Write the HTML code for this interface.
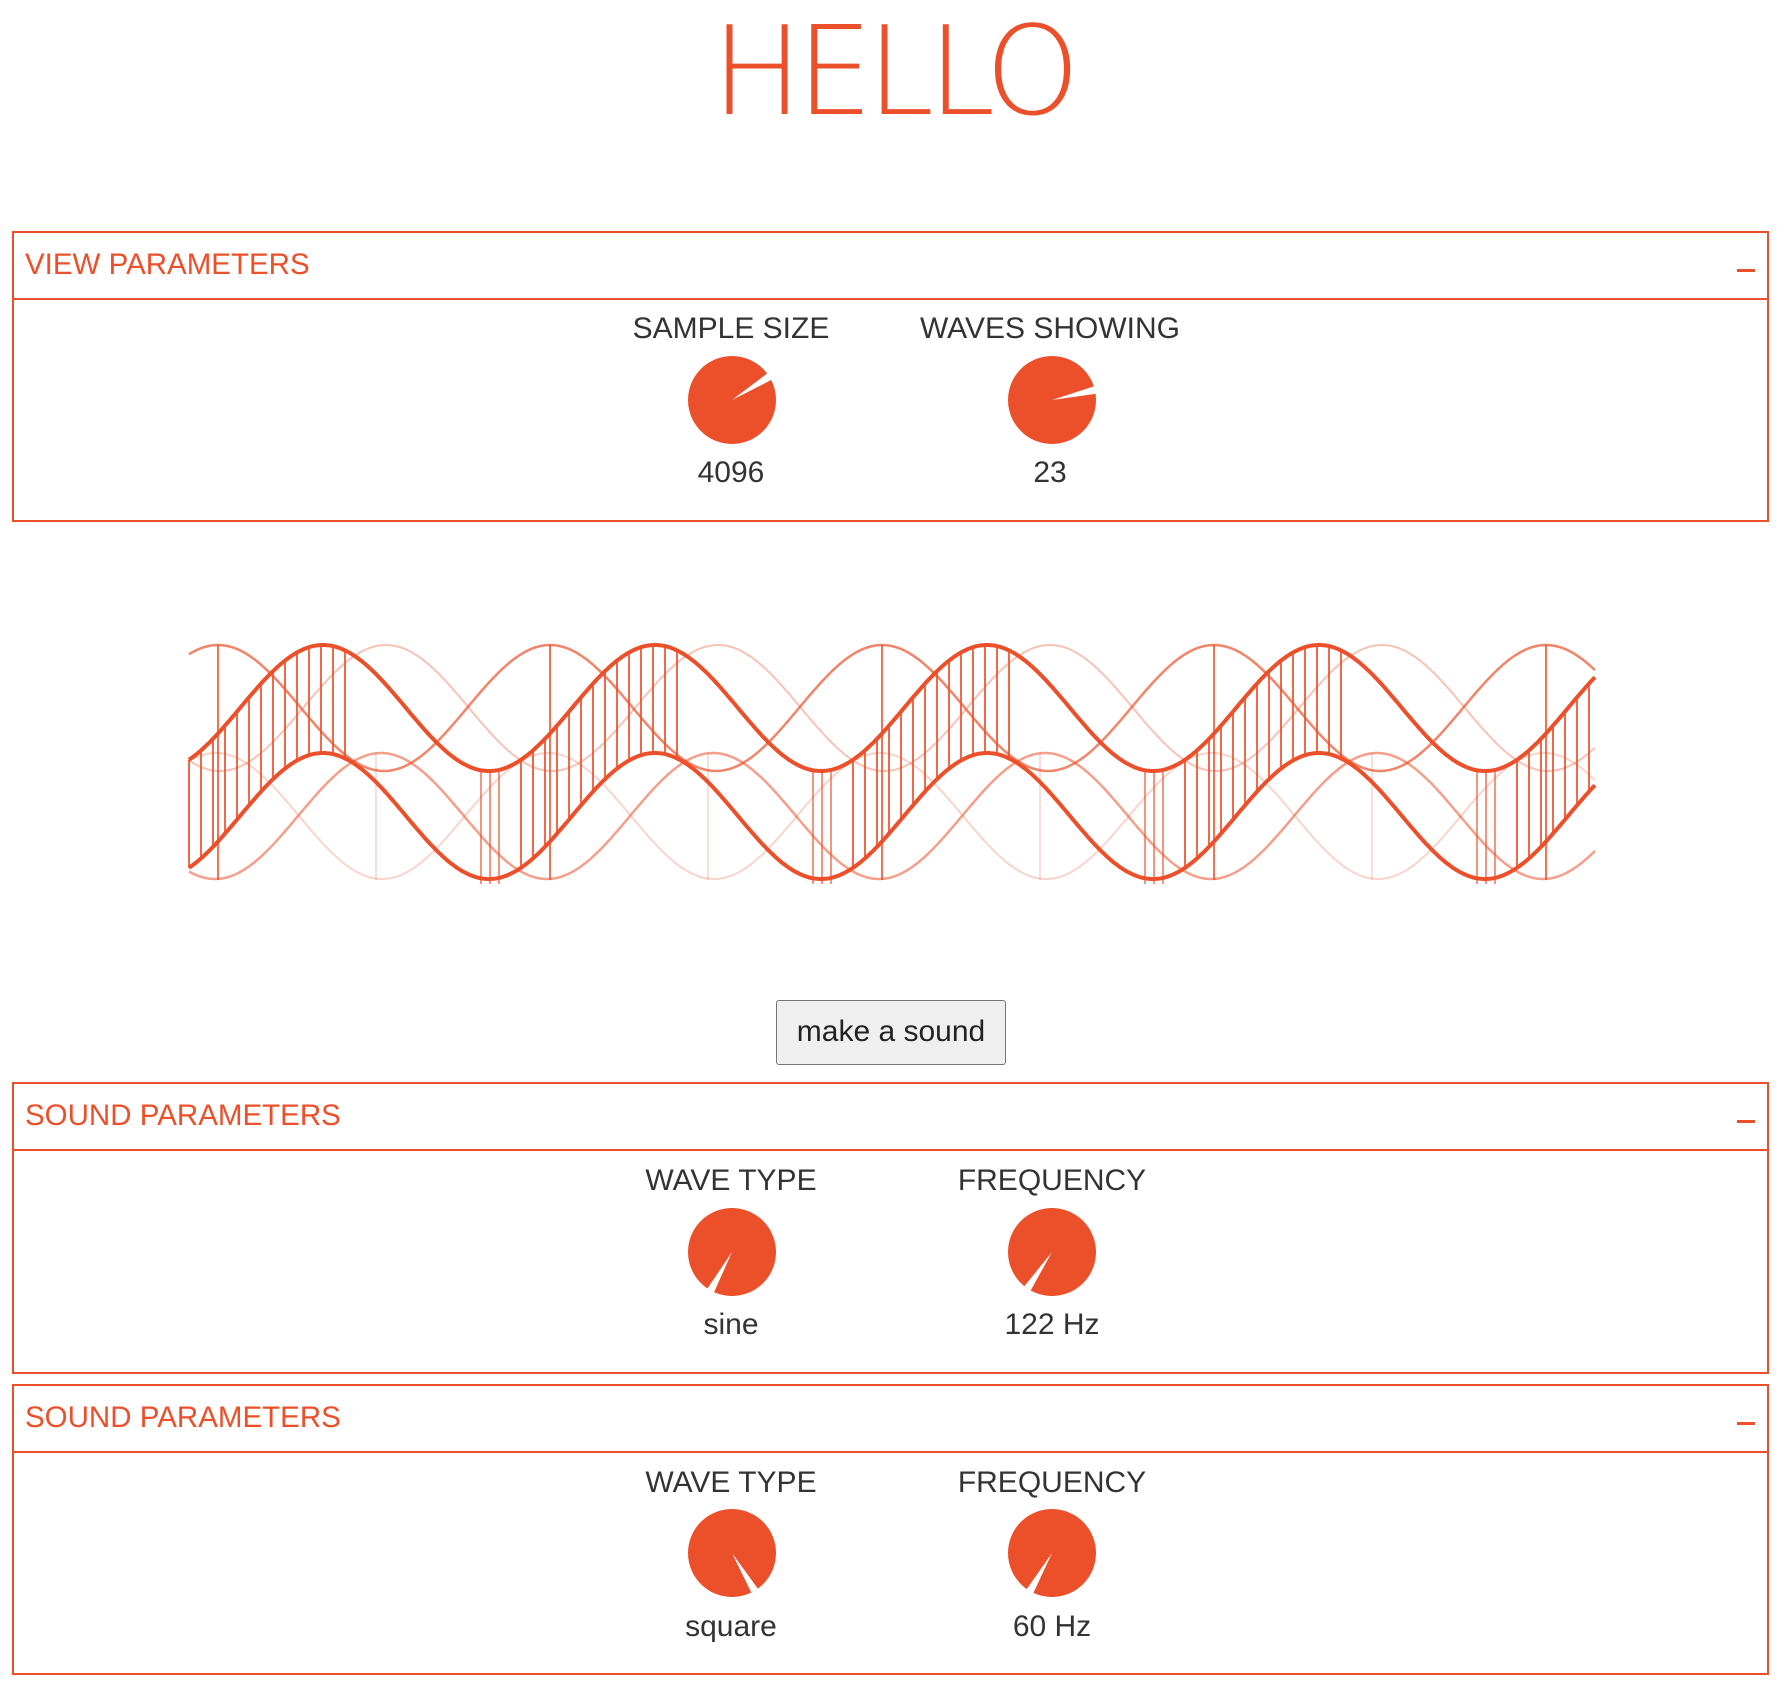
<!DOCTYPE html>
<html><head><meta charset="utf-8"><style>
body{margin:0;width:1786px;height:1702px;background:#fff;position:relative;font-family:"Liberation Sans",Arial,sans-serif;color:#333;overflow:hidden}
.abs{position:absolute}
.hello{left:0;width:1786px;top:12px;text-align:center;font-family:"DejaVu Sans","Liberation Sans",sans-serif;font-weight:200;font-size:123px;color:#ec502a;letter-spacing:-6px;line-height:122px;transform:scaleX(0.98)}
.box{position:absolute;left:12px;width:1757px;border:2px solid #ec502a;box-sizing:border-box}
.hd{position:absolute;left:0;right:0;top:0;height:65px;border-bottom:2px solid #ec502a}
.ttl{position:absolute;left:11px;top:15px;font-size:29.5px;color:#ec502a}
.minus{position:absolute;right:12px;top:36px;width:18px;height:3px;background:#ec502a}
.lbl{position:absolute;width:300px;text-align:center;font-size:30px;color:#333;line-height:36px}
.btn{left:776px;top:1000px;width:230px;height:65px;background:#efefef;border:1px solid #767676;border-radius:3px;box-sizing:border-box;font-size:30px;text-align:center;line-height:62px;color:#222}
</style></head><body>
<div class="abs hello">HELLO</div>

<div class="box" style="top:231px;height:291px"><div class="hd"><div class="ttl">VIEW PARAMETERS</div><div class="minus"></div></div></div>
<div class="lbl" style="left:581px;top:311px">SAMPLE SIZE</div>
<div class="lbl" style="left:900px;top:311px">WAVES SHOWING</div>
<div class="lbl" style="left:581px;top:455px">4096</div>
<div class="lbl" style="left:900px;top:455px">23</div>

<div class="abs btn">make a sound</div>

<div class="box" style="top:1082px;height:292px"><div class="hd"><div class="ttl">SOUND PARAMETERS</div><div class="minus"></div></div></div>
<div class="lbl" style="left:581px;top:1163px">WAVE TYPE</div>
<div class="lbl" style="left:902px;top:1163px">FREQUENCY</div>
<div class="lbl" style="left:581px;top:1307px">sine</div>
<div class="lbl" style="left:902px;top:1307px">122 Hz</div>

<div class="box" style="top:1384px;height:291px"><div class="hd"><div class="ttl">SOUND PARAMETERS</div><div class="minus"></div></div></div>
<div class="lbl" style="left:581px;top:1465px">WAVE TYPE</div>
<div class="lbl" style="left:902px;top:1465px">FREQUENCY</div>
<div class="lbl" style="left:581px;top:1609px">square</div>
<div class="lbl" style="left:902px;top:1609px">60 Hz</div>

<svg class="abs" style="left:0;top:0" width="1786" height="1702" id="s">
<g id="knobs"></g>
<g id="waves" fill="none" stroke="#ec502a"></g>
</svg>
<script>
var ns="http://www.w3.org/2000/svg";
function el(p,t,a){var e=document.createElementNS(ns,t);for(var k in a)e.setAttribute(k,a[k]);p.appendChild(e);return e;}
var K=document.getElementById('knobs');
[[732,400,-32],[1052,400,-13],[732,1252,119],[1052,1252,124],[732,1553,59],[1052,1553,120]].forEach(function(k){
 el(K,'circle',{cx:k[0],cy:k[1],r:44,fill:'#ec502a'});
 var a1=(k[2]-5)*Math.PI/180,a2=(k[2]+5)*Math.PI/180,r=50;
 el(K,'polygon',{fill:'#fff',points:k[0]+','+k[1]+' '+(k[0]+r*Math.cos(a1))+','+(k[1]+r*Math.sin(a1))+' '+(k[0]+r*Math.cos(a2))+','+(k[1]+r*Math.sin(a2))});
});
var W=document.getElementById('waves');
var P=332,x0=189,x1=1595;
function S(c,pk){return function(x){return c-63*Math.cos(2*Math.PI*(x-pk)/P);};}
function wave(f,w,op){var d='';for(var x=x0;x<=x1;x+=2){d+=(d?'L':'M')+x+' '+f(x).toFixed(1);}
 el(W,'path',{d:d,'stroke-width':w,opacity:op});}
var A=S(708,323),B=S(816,323);
wave(S(708,218),2.5,0.7);
wave(S(816,381),2.5,0.55);
wave(S(816,216),2,0.25);
wave(S(708,386),2,0.35);
wave(A,4,1);
wave(B,4,1);
for(var k=0;k<5;k++){
 var s=189+k*P;
 for(var x=s;x<s+165&&x<=x1;x+=12){el(W,'line',{x1:x,y1:A(x),x2:x,y2:B(x),'stroke-width':2,opacity:0.85});}
 if(s+29<=x1) el(W,'line',{x1:s+29,y1:645,x2:s+29,y2:880,'stroke-width':2,opacity:0.8});
 if(s+187<=x1) el(W,'line',{x1:s+187,y1:753,x2:s+187,y2:880,'stroke-width':1.5,opacity:0.25});
 for(var j=0;j<3;j++){var xx=s+292+j*9;if(xx<=x1)el(W,'line',{x1:xx,y1:772,x2:xx,y2:884,'stroke-width':2,opacity:0.6});}
}
</script>
</body></html>
